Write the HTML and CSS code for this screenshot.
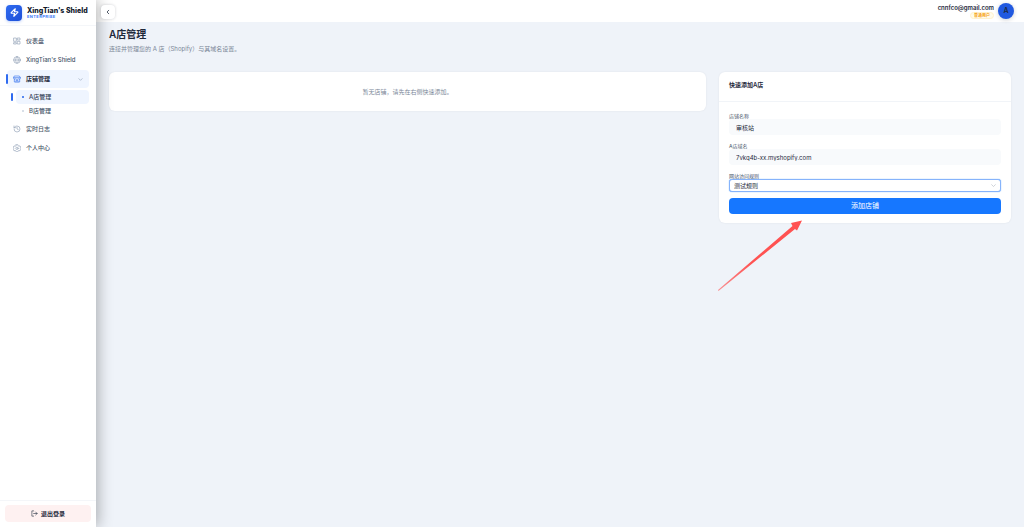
FILE: index.html
```html
<!DOCTYPE html>
<html lang="zh-CN">
<head>
  <meta charset="UTF-8" />
  <meta name="viewport" content="width=device-width, initial-scale=1.0"/>
  <title>A店管理 - XingTian's Shield</title>
  <link rel="stylesheet" href="styles.css">
</head>
<body>
  <div class="layout">

    <!-- Sidebar -->
    <aside class="sidebar">
      <div class="brand">
        <span class="brand-logo">
          <svg viewBox="0 0 24 24"><path d="M4 14a1 1 0 0 1-.8-1.6l9.9-10.2a.5.5 0 0 1 .9.5l-1.9 6A1 1 0 0 0 13 10h7a1 1 0 0 1 .8 1.6l-9.9 10.2a.5.5 0 0 1-.9-.5l1.9-6A1 1 0 0 0 11 14z"/></svg>
        </span>
        <div>
          <div class="brand-name">XingTian's Shield</div>
          <div class="brand-sub">ENTERPRISE</div>
        </div>
      </div>

      <nav class="menu">
        <a href="#" class="menu-item">
          <svg viewBox="0 0 24 24"><rect x="3" y="3" width="7" height="10"/><rect x="14" y="3" width="7" height="6"/><rect x="14" y="13" width="7" height="8"/><rect x="3" y="17" width="7" height="4"/></svg>
          <span>仪表盘</span>
        </a>
        <a href="#" class="menu-item">
          <svg viewBox="0 0 24 24"><circle cx="12" cy="12" r="10"/><path d="M2 12h20M12 2c-5.500 5.500-5.500 14.500 0 20 5.500-5.500 5.500-14.500 0-20z"/></svg>
          <span>XingTian's Shield</span>
        </a>
        <a href="#" class="menu-item active">
          <svg viewBox="0 0 24 24"><path d="M5 3h14l3 5v2a3 3 0 0 1-5 1.500 3 3 0 0 1-5 0 3 3 0 0 1-5 0A3 3 0 0 1 2 10V8zM2 8h20M4 12.500V21h16v-8.500M9 21v-5h6v5"/></svg>
          <span>店铺管理</span>
          <svg class="chevron" viewBox="0 0 24 24"><path d="M4 8l8 8 8-8"/></svg>
        </a>
        <div class="submenu">
          <a href="#" class="submenu-item active">A店管理</a>
          <a href="#" class="submenu-item">B店管理</a>
        </div>
        <a href="#" class="menu-item">
          <svg viewBox="0 0 24 24"><path d="M3 12a9 9 0 1 0 9-9 10 10 0 0 0-7 3L3 8M3 3v5h5M12 7v5l4 2"/></svg>
          <span>实时日志</span>
        </a>
        <a href="#" class="menu-item">
          <svg viewBox="0 0 24 24"><path d="M9.500 2h5l1 3.500 2 1.100 3.500-.9 2.500 4.300-2.600 2.600v1l2.600 2.400-2.500 4.300-3.500-.9-2 1.100-1 3h-5l-1-3-2-1.100-3.500.9L.5 16l2.600-2.400v-1L.5 10 3 5.700l3.500.9 2-1.100z"/><circle cx="12" cy="13" r="3.500"/></svg>
          <span>个人中心</span>
        </a>
      </nav>

      <div class="sidebar-footer">
        <button type="button" class="logout">
          <svg viewBox="0 0 24 24"><path d="M9 3H3v18h6M9 12h12M16 7l5 5-5 5"/></svg>
          <span>退出登录</span>
        </button>
      </div>
    </aside>

    <div class="content">
      <!-- Top bar -->
      <header class="topbar">
        <button type="button" class="collapse" aria-label="收起菜单">
          <svg viewBox="0 0 24 24"><path d="M15 5l-7 7 7 7"/></svg>
        </button>
        <div class="user">
          <div class="user-info">
            <div class="user-email">cnnfco@gmail.com</div>
            <span class="user-role">普通用户</span>
          </div>
          <span class="avatar">A</span>
        </div>
      </header>

      <main class="main">
        <h1>A店管理</h1>
        <p class="desc">连接并管理您的 A 店（Shopify）与其域名设置。</p>

        <div class="columns">
          <section class="card empty">暂无店铺，请先在右侧快速添加。</section>

          <section class="card form-card">
            <h2>快速添加A店</h2>
            <form class="form">
              <label for="shopName">店铺名称</label>
              <input type="text" id="shopName" value="审核站" />
              <label for="shopDomain">A店域名</label>
              <input type="text" id="shopDomain" value="7vkq4b-xx.myshopify.com" />
              <label for="rule">网站访问规则</label>
              <div class="select-wrap">
                <select id="rule">
                  <option>测试规则</option>
                </select>
                <svg viewBox="0 0 24 24"><path d="M3 8l9 9 9-9"/></svg>
              </div>
              <button type="submit" class="submit">添加店铺</button>
            </form>

            <!-- Pointer to the submit button -->
            <svg class="pointer" viewBox="0 0 86 72">
              <defs>
                <linearGradient id="tail" x1="0" y1="1" x2="1" y2="0">
                  <stop offset="0" stop-color="#ff5252" stop-opacity="0.6"/>
                  <stop offset="0.4" stop-color="#ff5252"/>
                </linearGradient>
              </defs>
              <path fill="url(#tail)" d="M1 70L75.500 6L74 3L85 0.500L80 10.500L78 9L1.500 71z"/>
            </svg>
          </section>
        </div>
      </main>
    </div>

  </div>
</body>
</html>
```

FILE: styles.css
```css
* {
  box-sizing: border-box;
}
body {
  margin: 0;
  font-family: Inter, "Noto Sans CJK SC", sans-serif;
  font-size: 6px;
  line-height: 8px;
  color: #1e293b;
  background: #eff3f9;
}
button, input, select {
  font: inherit;
  color: inherit;
}
a {
  color: inherit;
  text-decoration: none;
}
svg {
  display: block;
  fill: none;
  stroke: currentColor;
  stroke-width: 2;
  stroke-linecap: round;
  stroke-linejoin: round;
}
.layout {
  display: grid;
  grid-template-columns: 96px 1fr;
  min-height: 100vh;
}

/* Sidebar */
.sidebar {
  position: relative;
  z-index: 1;
  display: flex;
  flex-direction: column;
  background: #fff;
  box-shadow: 2px 0 14px rgba(0, 0, 0, 0.3);
}
.brand {
  display: flex;
  align-items: center;
  gap: 5px;
  height: 26px;
  padding: 0 6px;
  border-bottom: 1px solid #f4f6f9;
}
.brand-logo {
  display: grid;
  place-items: center;
  width: 16px;
  height: 16px;
  border-radius: 4px;
  color: #fff;
  background: linear-gradient(135deg, #2f6bf0, #1d4fd8);
  box-shadow: 0 1px 3px rgba(37, 99, 235, 0.3);
}
.brand-logo svg {
  width: 9px;
  height: 9px;
  stroke-width: 3;
}
.brand-name {
  font-size: 7px;
  font-weight: 800;
  line-height: 8px;
  white-space: nowrap;
  color: #0f172a;
}
.brand-sub {
  font-size: 4px;
  font-weight: 700;
  line-height: 4px;
  letter-spacing: 0.1em;
  color: #3b7cf7;
}
.menu {
  display: flex;
  flex: 1;
  flex-direction: column;
  gap: 1px;
  padding: 6px 7px;
}
.menu-item {
  position: relative;
  display: flex;
  align-items: center;
  gap: 5px;
  height: 18px;
  padding: 0 6px;
  border-radius: 4px;
  font-weight: 500;
  color: #475569;
}
.menu-item svg {
  width: 8px;
  height: 8px;
  color: #94a3b8;
}
.menu-item .chevron {
  width: 5px;
  height: 5px;
  margin-left: auto;
  stroke-width: 3;
}
.menu-item.active {
  font-weight: 700;
  color: #1e293b;
  background: #eff5ff;
}
.menu-item.active svg {
  color: #3b76ee;
}
.menu-item.active .chevron {
  color: #94a3b8;
}
.menu-item.active::before,
.submenu-item.active::before {
  content: "";
  position: absolute;
  left: -1px;
  width: 2px;
  height: 10px;
  border-radius: 1px;
  background: #2f6bf0;
}
.submenu {
  display: flex;
  flex-direction: column;
  padding: 1px 0 1px 9px;
}
.submenu-item {
  position: relative;
  display: flex;
  align-items: center;
  gap: 5px;
  height: 14px;
  padding-left: 6px;
  border-radius: 4px;
  font-weight: 500;
  color: #475569;
}
.submenu-item::after {
  content: "";
  order: -1;
  width: 2px;
  height: 2px;
  border-radius: 50%;
  background: #cbd5e1;
}
.submenu-item.active {
  color: #334155;
  background: #eff5ff;
}
.submenu-item.active::before {
  left: -5px;
  height: 8px;
}
.submenu-item.active::after {
  background: #2563eb;
}
.sidebar-footer {
  padding: 4px 5px 5px;
  border-top: 1px solid #f4f6f9;
}
.logout {
  display: flex;
  align-items: center;
  justify-content: center;
  gap: 3px;
  width: 100%;
  height: 17px;
  padding: 0;
  border: none;
  border-radius: 4px;
  font-weight: 600;
  background: #fef1f1;
  cursor: pointer;
}
.logout svg {
  width: 7px;
  height: 7px;
}

/* Top bar */
.topbar {
  display: flex;
  align-items: center;
  justify-content: space-between;
  height: 22px;
  padding: 0 10px 0 5px;
  background: #fff;
}
.collapse {
  position: relative;
  z-index: 2;
  display: grid;
  place-items: center;
  width: 14px;
  height: 14px;
  margin-top: 2px;
  padding: 0;
  border: none;
  border-radius: 4px;
  background: #fff;
  box-shadow: 0 0 3px rgba(15, 23, 42, 0.2);
  cursor: pointer;
}
.collapse svg {
  width: 6px;
  height: 6px;
  stroke-width: 3;
}
.user {
  display: flex;
  align-items: center;
  gap: 4px;
}
.user-info {
  display: flex;
  flex-direction: column;
  align-items: flex-end;
}
.user-email {
  font-weight: 600;
}
.user-role {
  padding: 0 3px;
  border: 1px solid #fff1cc;
  border-radius: 4px;
  font-size: 4px;
  font-weight: 600;
  line-height: 5px;
  color: #f59e0b;
  background: #fffbeb;
}
.avatar {
  display: grid;
  place-items: center;
  width: 16px;
  height: 16px;
  border-radius: 50%;
  font-size: 7px;
  font-weight: 600;
  background: #2159e0;
  box-shadow: 0 1px 4px rgba(15, 23, 42, 0.2);
}

/* Page */
.main {
  padding: 5px 13px;
}
h1 {
  margin: 0;
  font-size: 10px;
  font-weight: 600;
  line-height: 14px;
}
.desc {
  margin: 4px 0 19px;
  color: #7b8798;
}
.columns {
  display: grid;
  grid-template-columns: 1fr 292px;
  align-items: start;
  gap: 13px;
}
.card {
  border-radius: 6px;
  background: #fff;
  box-shadow: 0 0 2px rgba(15, 23, 42, 0.08);
}
.empty {
  padding: 16px 16px 15px;
  text-align: center;
  color: #7b8798;
}
.form-card {
  position: relative;
}
h2 {
  margin: 0;
  padding: 9px 10px 12px;
  border-bottom: 1px solid #f1f4f8;
  font-size: 6px;
  font-weight: 600;
  line-height: 8px;
}
.form {
  display: flex;
  flex-direction: column;
  padding: 11px 10px 9px;
}
.form label {
  font-size: 5px;
  line-height: 6px;
  color: #475569;
}
.form input {
  width: 100%;
  height: 16px;
  margin-bottom: 8px;
  padding: 0 7px;
  border: none;
  border-radius: 4px;
  background: #f8fafc;
}
.select-wrap {
  position: relative;
  margin-bottom: 6px;
}
.select-wrap select {
  display: block;
  width: 100%;
  height: 13px;
  padding: 0 4px;
  border: 1px solid #86b3fb;
  border-radius: 3px;
  appearance: none;
  background: #fff;
  box-shadow: 0 0 1px #4096ff;
}
.select-wrap svg {
  position: absolute;
  top: 4px;
  right: 5px;
  width: 5px;
  height: 5px;
  stroke-width: 3;
  color: #b4bac3;
  pointer-events: none;
}
.submit {
  height: 16px;
  padding: 0;
  border: none;
  border-radius: 4px;
  font-size: 7px;
  color: #fff;
  background: #1677ff;
  cursor: pointer;
}
.pointer {
  position: absolute;
  top: 148px;
  left: -2px;
  width: 86px;
  height: 72px;
  stroke: none;
}
```
